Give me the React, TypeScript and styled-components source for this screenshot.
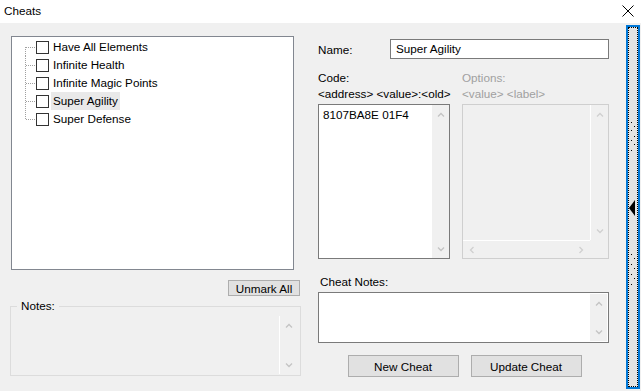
import React from "react";
import styled, { createGlobalStyle } from "styled-components";

const GlobalStyle = createGlobalStyle`
    html, body {
        margin: 0;
        padding: 0;
        background: #f0f0f0;
    }
    body {
        font-family: "Segoe UI", "Liberation Sans", Arial, sans-serif;
        font-size: 11.7px;
        color: #000;
    }
    * {
        box-sizing: border-box;
    }
`;

const cheats = [
    "Have All Elements",
    "Infinite Health",
    "Infinite Magic Points",
    "Super Agility",
    "Super Defense",
];

type Dir = "up" | "down" | "left" | "right";

const Chevron = ({ dir, color = "#c4c4c4" }: { dir: Dir; color?: string }) => {
    const rot = { up: 0, down: 180, left: 270, right: 90 }[dir];
    return (
        <svg width="8" height="8" viewBox="0 0 8 8" style={{ display: "block" }}>
            <polyline
                points="1,5.5 4,2.5 7,5.5"
                fill="none"
                stroke={color}
                strokeWidth="1.3"
                transform={`rotate(${rot} 4 4)`}
            />
        </svg>
    );
};

const TreeLine = ({ first, last }: { first: boolean; last: boolean }) => (
    <svg width="11" height="18" style={{ display: "block", flex: "none" }}>
        <line
            x1="0.5"
            y1={first ? 9 : 0}
            x2="0.5"
            y2={last ? 9 : 18}
            stroke="#a0a0a0"
            strokeDasharray="1 1"
        />
        <line x1="1" y1="9.5" x2="11" y2="9.5" stroke="#a0a0a0" strokeDasharray="1 1" />
    </svg>
);

const App = () => {
    return (
        <Window>
            <GlobalStyle />
            <TitleBar>
                <Title>Cheats</Title>
                <CloseButton>
                    <svg width="12" height="12" viewBox="0 0 12 12">
                        <path d="M0.5 0.5 L11.5 11.5 M11.5 0.5 L0.5 11.5" stroke="#000" strokeWidth="1" />
                    </svg>
                </CloseButton>
            </TitleBar>
            <Body>
                <LeftPane>
                    <Tree>
                        {cheats.map((name, i) => (
                            <TreeRow key={name}>
                                <TreeLine first={i === 0} last={i === cheats.length - 1} />
                                <Check />
                                <TreeLabel $selected={i === 3}>{name}</TreeLabel>
                            </TreeRow>
                        ))}
                    </Tree>
                    <UnmarkRow>
                        <Button $width={72} $height={16}>Unmark All</Button>
                    </UnmarkRow>
                    <Group>
                        <Legend>Notes:</Legend>
                        <NotesInner>
                            <ScrollColumn $white>
                                <Chevron dir="up" />
                                <Chevron dir="down" />
                            </ScrollColumn>
                        </NotesInner>
                    </Group>
                </LeftPane>

                <RightPane>
                    <NameRow>
                        <FieldLabel>Name:</FieldLabel>
                        <TextInput>Super Agility</TextInput>
                    </NameRow>
                    <CodeArea>
                        <CodeColumn>
                            <Label>Code:</Label>
                            <Label>&lt;address&gt; &lt;value&gt;:&lt;old&gt;</Label>
                            <CodeBox>
                                <CodeText>8107BA8E 01F4</CodeText>
                                <ScrollColumn>
                                    <Chevron dir="up" />
                                    <Chevron dir="down" />
                                </ScrollColumn>
                            </CodeBox>
                        </CodeColumn>
                        <OptionsColumn>
                            <Label $disabled>Options:</Label>
                            <Label $disabled>&lt;value&gt; &lt;label&gt;</Label>
                            <OptionsBox>
                                <div />
                                <ScrollColumn $white>
                                    <Chevron dir="up" color="#d0d0d0" />
                                    <Chevron dir="down" color="#d0d0d0" />
                                </ScrollColumn>
                                <HScroll>
                                    <Chevron dir="left" color="#d0d0d0" />
                                    <Chevron dir="right" color="#d0d0d0" />
                                </HScroll>
                                <div />
                            </OptionsBox>
                        </OptionsColumn>
                    </CodeArea>
                    <NotesLabel>Cheat Notes:</NotesLabel>
                    <CheatNotes>
                        <ScrollColumn $inset>
                            <Chevron dir="up" />
                            <Chevron dir="down" />
                        </ScrollColumn>
                    </CheatNotes>
                    <ButtonRow>
                        <Button $width={111} $height={22}>New Cheat</Button>
                        <Button $width={111} $height={22}>Update Cheat</Button>
                    </ButtonRow>
                </RightPane>

                <Splitter>
                    <svg width="8" height="358" viewBox="0 0 8 358">
                        {[94, 98, 102, 108, 112, 116, 122].map((y, i) => (
                            <rect key={"a" + y} x={i % 2 ? 5 : 2} y={y} width="1" height="1" fill="#000" />
                        ))}
                        <polygon points="0,180 6,172 6,188" fill="#000" />
                        {[226, 230, 236, 240, 246, 250, 256].map((y, i) => (
                            <rect key={"b" + y} x={i % 2 ? 5 : 2} y={y} width="1" height="1" fill="#000" />
                        ))}
                    </svg>
                </Splitter>
            </Body>
        </Window>
    );
};

export default App;

const Window = styled.div`
    width: 641px;
    height: 391px;
    background: #f0f0f0;
    overflow: hidden;
`;

const TitleBar = styled.div`
    height: 23px;
    background: #fff;
    display: flex;
    align-items: center;
    justify-content: space-between;
    padding: 0 7px 1px 4px;
`;

const Title = styled.div`
    line-height: 16px;
`;

const CloseButton = styled.div`
    width: 12px;
    height: 12px;
    svg {
        display: block;
    }
`;

const Body = styled.div`
    display: flex;
    padding-left: 10px;
`;

const LeftPane = styled.div`
    width: 291px;
    padding-top: 13px;
    display: flex;
    flex-direction: column;
`;

const Tree = styled.div`
    margin-left: 1px;
    width: 283px;
    height: 234px;
    border: 1px solid #828790;
    background: #fff;
    padding: 1px 0 0 13px;
`;

const TreeRow = styled.div`
    display: flex;
    align-items: center;
    height: 18px;
`;

const Check = styled.div`
    width: 13px;
    height: 13px;
    border: 1px solid #333;
    background: #fff;
    flex: none;
`;

const TreeLabel = styled.div<{ $selected?: boolean }>`
    margin-left: 2px;
    padding: 0 2px;
    height: 18px;
    line-height: 18px;
    white-space: nowrap;
    background: ${(p) => (p.$selected ? "#e9e9e9" : "transparent")};
`;

const UnmarkRow = styled.div`
    display: flex;
    justify-content: flex-end;
    margin-top: 10px;
    padding-right: 1px;
`;

const Button = styled.div<{ $width: number; $height: number }>`
    width: ${(p) => p.$width}px;
    height: ${(p) => p.$height}px;
    background: #e1e1e1;
    border: 1px solid #adadad;
    display: flex;
    align-items: center;
    justify-content: center;
    white-space: nowrap;
`;

const Group = styled.div`
    position: relative;
    margin-top: 10px;
    height: 70px;
    border: 1px solid #dcdcdc;
    display: flex;
    flex-direction: column;
    padding: 9px 3px 1px 0;
`;

const Legend = styled.div`
    position: absolute;
    top: -8px;
    left: 6px;
    padding: 0 4px;
    line-height: 14px;
    background: #f0f0f0;
`;

const NotesInner = styled.div`
    flex: 1;
    display: flex;
    justify-content: flex-end;
`;

const ScrollColumn = styled.div<{ $white?: boolean; $inset?: boolean }>`
    width: ${(p) => (p.$white ? 18 : 17)}px;
    flex: none;
    background: #f0f0f0;
    border-left: ${(p) => (p.$white ? "1px solid #fff" : "none")};
    display: flex;
    flex-direction: column;
    align-items: center;
    justify-content: space-between;
    padding: 6px 0 5px;
    margin: ${(p) => (p.$inset ? "1px 1px 1px 0" : "0")};
`;

const RightPane = styled.div`
    width: 291px;
    margin-left: 17px;
    padding-top: 16px;
    display: flex;
    flex-direction: column;
`;

const NameRow = styled.div`
    display: flex;
    align-items: center;
    height: 20px;
`;

const FieldLabel = styled.div`
    width: 72px;
    flex: none;
`;

const TextInput = styled.div`
    flex: 1;
    height: 20px;
    border: 1px solid #7a7a7a;
    background: #fff;
    padding-left: 5px;
    line-height: 18px;
`;

const CodeArea = styled.div`
    display: flex;
    gap: 12px;
    margin-top: 11px;
`;

const CodeColumn = styled.div`
    width: 132px;
    display: flex;
    flex-direction: column;
`;

const OptionsColumn = styled.div`
    width: 147px;
    display: flex;
    flex-direction: column;
`;

const Label = styled.div<{ $disabled?: boolean }>`
    line-height: 16px;
    white-space: nowrap;
    color: ${(p) => (p.$disabled ? "#a0a0a0" : "#000")};
`;

const CodeBox = styled.div`
    margin-top: 2px;
    height: 155px;
    border: 1px solid #7a7a7a;
    background: #fff;
    display: flex;
`;

const CodeText = styled.div`
    flex: 1;
    padding: 2px 0 0 4px;
    line-height: 16px;
`;

const OptionsBox = styled.div`
    margin-top: 2px;
    height: 155px;
    border: 1px solid #cfcfcf;
    background: #f0f0f0;
    display: grid;
    grid-template-columns: 1fr 18px;
    grid-template-rows: 1fr 18px;
`;

const HScroll = styled.div`
    border-top: 1px solid #fff;
    display: flex;
    align-items: center;
    justify-content: space-between;
    padding: 0 5px;
`;

const NotesLabel = styled.div`
    margin-top: 15px;
    padding-left: 2px;
    line-height: 16px;
`;

const CheatNotes = styled.div`
    margin-top: 2px;
    height: 51px;
    border: 1px solid #7a7a7a;
    background: #fff;
    display: flex;
    justify-content: flex-end;
`;

const ButtonRow = styled.div`
    display: flex;
    justify-content: center;
    gap: 12px;
    margin-top: 12px;
    padding-left: 2px;
`;

const Splitter = styled.div`
    margin-left: 17px;
    margin-top: 2px;
    width: 14px;
    height: 364px;
    border: 2px solid #0078d7;
    border-left-width: 2px;
    background: #e3e3e3;
    padding: 0;
    display: flex;
    border-style: solid;
    outline: none;
    & > svg {
        display: block;
        width: 10px;
        height: 360px;
        border: 1px dotted #000;
        background: #e3e3e3;
    }
`;
